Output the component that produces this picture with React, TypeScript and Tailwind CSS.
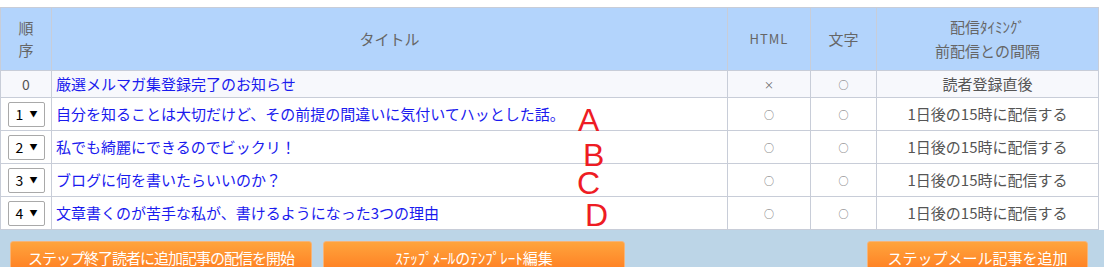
import React from "react";

type Step = {
  order: number;
  title: string;
  html: string;
  text: string;
  timing: string;
  mark?: { letter: string; left: string; top: string };
};

const steps: Step[] = [
  { order: 0, title: "厳選メルマガ集登録完了のお知らせ", html: "×", text: "○", timing: "読者登録直後" },
  {
    order: 1,
    title: "自分を知ることは大切だけど、その前提の間違いに気付いてハッとした話。",
    html: "○",
    text: "○",
    timing: "1日後の15時に配信する",
    mark: { letter: "A", left: "left-[526px]", top: "top-[6px]" },
  },
  {
    order: 2,
    title: "私でも綺麗にできるのでビックリ！",
    html: "○",
    text: "○",
    timing: "1日後の15時に配信する",
    mark: { letter: "B", left: "left-[531px]", top: "top-[8px]" },
  },
  {
    order: 3,
    title: "ブログに何を書いたらいいのか？",
    html: "○",
    text: "○",
    timing: "1日後の15時に配信する",
    mark: { letter: "C", left: "left-[525px]", top: "top-[3px]" },
  },
  {
    order: 4,
    title: "文章書くのが苦手な私が、書けるようになった3つの理由",
    html: "○",
    text: "○",
    timing: "1日後の15時に配信する",
    mark: { letter: "D", left: "left-[533px]", top: "top-[2px]" },
  },
];

function OrderSelect({ value }: { value: number }) {
  return (
    <div className="mx-auto flex h-[25px] w-[37px] items-center justify-between rounded-[2px] border border-[#a9a9a9] bg-white pl-[7px] pr-[6px] text-[14px] leading-none text-black">
      <span>{value}</span>
      <span className="text-[8px]">▼</span>
    </div>
  );
}

function OrangeButton({ label, width, size }: { label: string; width: string; size: string }) {
  return (
    <button
      className={`${width} ${size} h-[34px] whitespace-nowrap rounded-[3px] border border-[#f4b47a] bg-gradient-to-b from-[#ffa43c] to-[#ff7a1e] leading-[30px] text-white`}
    >
      {label}
    </button>
  );
}

export default function App() {
  return (
    <div className="h-[267px] w-[1104px] overflow-hidden bg-white pt-[7px] font-['Noto_Sans_CJK_JP','Noto_Sans',sans-serif]">
      <table className="w-[1098px] table-fixed border-collapse border border-[#c8cdd8]">
        <colgroup>
          <col className="w-[51px]" />
          <col className="w-[676px]" />
          <col className="w-[83px]" />
          <col className="w-[66px]" />
          <col className="w-[222px]" />
        </colgroup>

        {/* Header */}
        <thead>
          <tr className="h-[63px] bg-[#b3d4fc] text-[15px] text-[#666]">
            <th className="border border-[#c8cdd8] font-normal leading-[22px]">
              順<br />序
            </th>
            <th className="border border-[#c8cdd8] font-normal">タイトル</th>
            <th className="border border-[#c8cdd8] text-[13px] font-normal tracking-[1px]">HTML</th>
            <th className="border border-[#c8cdd8] font-normal">文字</th>
            <th className="border border-[#c8cdd8] font-normal leading-[24px]">
              配信ﾀｲﾐﾝｸﾞ<br />前配信との間隔
            </th>
          </tr>
        </thead>

        <tbody>
          {steps.map((s) => (
            <tr
              key={s.order}
              className={s.order === 0 ? "h-[27px] bg-[#f7f8fc]" : "h-[33px] bg-white"}
            >
              <td className="border border-[#c8cdd8] text-center text-[14px] text-[#555]">
                {s.order === 0 ? s.order : <OrderSelect value={s.order} />}
              </td>
              <td className="relative border border-[#c8cdd8] pl-[4px] text-[15px] text-[#1a1aee]">
                {s.title}
                {s.mark && (
                  <span
                    className={`absolute ${s.mark.left} ${s.mark.top} font-['Liberation_Sans',sans-serif] text-[32px] leading-[32px] text-[#ee1c24]`}
                  >
                    {s.mark.letter}
                  </span>
                )}
              </td>
              <td className="border border-[#c8cdd8] text-center text-[10px] text-[#666]">{s.html}</td>
              <td className="border border-[#c8cdd8] text-center text-[10px] text-[#666]">{s.text}</td>
              <td className="border border-[#c8cdd8] text-center text-[15px] text-[#555]">{s.timing}</td>
            </tr>
          ))}
        </tbody>
      </table>

      {/* Actions */}
      <div className="flex h-[40px] items-start bg-[#bcd5e7] pl-[10px] pr-[16px] pt-[11px]">
        <OrangeButton
          label="ステップ終了読者に追加記事の配信を開始"
          width="w-[302px]"
          size="text-[15px] tracking-[-1px]"
        />
        <div className="ml-[11px]">
          <OrangeButton label="ｽﾃｯﾌﾟﾒｰﾙのﾃﾝﾌﾟﾚｰﾄ編集" width="w-[302px]" size="text-[15px]" />
        </div>
        <div className="ml-auto">
          <OrangeButton label="ステップメール記事を追加" width="w-[221px]" size="text-[15px]" />
        </div>
      </div>
    </div>
  );
}
